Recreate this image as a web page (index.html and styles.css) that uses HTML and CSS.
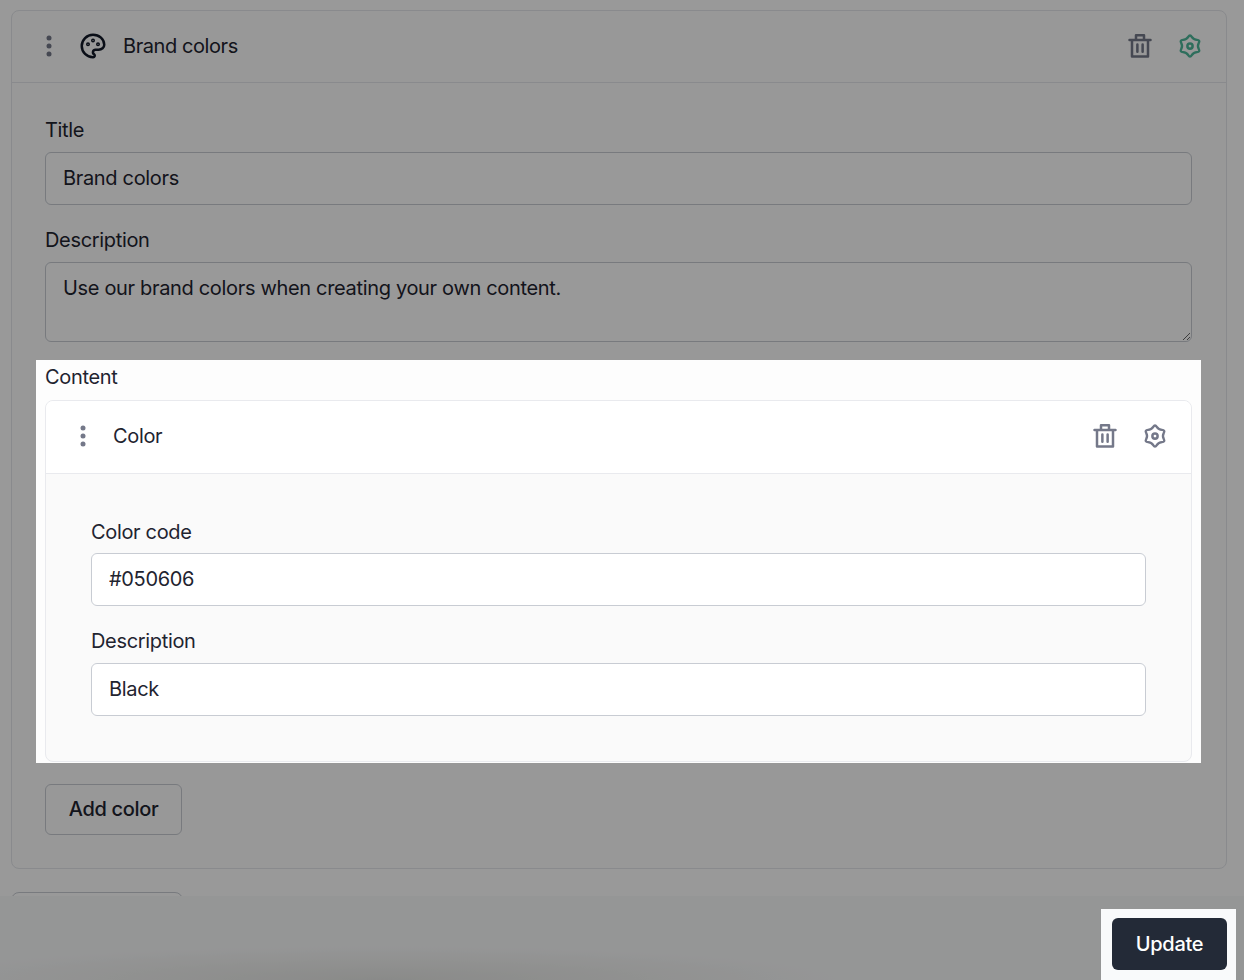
FILE: index.html
```html
<!DOCTYPE html>
<html lang="en">
<head>
<meta charset="utf-8">
<title>Brand colors</title>
<link rel="stylesheet" href="styles.css">
</head>
<body>
<div class="page">
  <section class="card">
    <header class="card-head">
      <svg class="dots" viewBox="0 0 6 24" width="6" height="24"><circle cx="3" cy="4" r="2.5"/><circle cx="3" cy="12" r="2.5"/><circle cx="3" cy="20" r="2.5"/></svg>
      <svg class="palette" viewBox="0 0 24 24" width="30" height="30" fill="none" stroke="currentColor" stroke-width="2" stroke-linecap="round" stroke-linejoin="round"><path d="M12 21a9 9 0 0 1 0-18c4.97 0 9 3.582 9 8 0 1.06-.474 2.078-1.318 2.828-.844.75-1.989 1.172-3.182 1.172h-2.5a2 2 0 0 0-1 3.75 1.3 1.3 0 0 1-1 2.25"/><circle cx="8" cy="10.5" r=".6"/><circle cx="12" cy="7.5" r=".6"/><circle cx="16" cy="10.5" r=".6"/></svg>
      <span class="card-title">Brand colors</span>
      <span class="actions">
        <svg class="icon" viewBox="0 0 24 24" width="30" height="30" fill="none" stroke="currentColor" stroke-width="2" stroke-linecap="round" stroke-linejoin="round"><path d="M3.600 7.200h16.800M8.800 7.200V3.400h6.400v3.800M5.600 7.200V20.400h12.800V7.200M9.900 10.800v5.800M14.100 10.800v5.800"/></svg>
        <svg class="icon icon-green" viewBox="0 0 24 24" width="30" height="30" fill="none" stroke="currentColor" stroke-width="2" stroke-linecap="round" stroke-linejoin="round"><path transform="translate(.6 .6) scale(.95)" d="M10.500 4.350Q12 1.900 13.500 4.350 15 6.800 17.880 6.880 20.750 6.950 19.380 9.480 18 12 19.380 14.520 20.750 17.050 17.880 17.120 15 17.200 13.500 19.650 12 22.100 10.500 19.650 9 17.200 6.120 17.120 3.250 17.050 4.620 14.520 6 12 4.620 9.480 3.250 6.950 6.120 6.880 9 6.800 10.500 4.350Z"/><circle cx="12" cy="12" r="2.100"/></svg>
      </span>
    </header>
    <div class="card-body">
      <label class="field">
        <span class="label">Title</span>
        <input class="input" type="text" value="Brand colors">
      </label>
      <label class="field">
        <span class="label">Description</span>
        <textarea class="input textarea">Use our brand colors when creating your own content.</textarea>
      </label>
      <div class="content">
        <span class="label content-label">Content</span>
        <section class="subcard">
          <header class="subcard-head">
            <svg class="dots" viewBox="0 0 6 24" width="6" height="24"><circle cx="3" cy="4" r="2.500"/><circle cx="3" cy="12" r="2.500"/><circle cx="3" cy="20" r="2.500"/></svg>
            <span class="card-title">Color</span>
            <span class="actions">
              <svg class="icon" viewBox="0 0 24 24" width="30" height="30" fill="none" stroke="currentColor" stroke-width="2" stroke-linecap="round" stroke-linejoin="round"><path d="M3.600 7.200h16.800M8.800 7.200V3.400h6.400v3.800M5.600 7.200V20.400h12.800V7.200M9.900 10.800v5.800M14.100 10.800v5.800"/></svg>
              <svg class="icon" viewBox="0 0 24 24" width="30" height="30" fill="none" stroke="currentColor" stroke-width="2" stroke-linecap="round" stroke-linejoin="round"><path transform="translate(.6 .6) scale(.95)" d="M10.500 4.350Q12 1.900 13.500 4.350 15 6.800 17.880 6.880 20.750 6.950 19.380 9.480 18 12 19.380 14.520 20.750 17.050 17.880 17.120 15 17.200 13.500 19.650 12 22.100 10.500 19.650 9 17.200 6.120 17.120 3.250 17.050 4.620 14.520 6 12 4.620 9.480 3.250 6.950 6.120 6.880 9 6.800 10.500 4.350Z"/><circle cx="12" cy="12" r="2.100"/></svg>
            </span>
          </header>
          <div class="subcard-body">
            <label class="field">
              <span class="label">Color code</span>
              <input class="input" type="text" value="#050606">
            </label>
            <label class="field">
              <span class="label label-wide">Description</span>
              <input class="input" type="text" value="Black">
            </label>
          </div>
        </section>
      </div>
      <button class="btn-outline" type="button">Add color</button>
    </div>
  </section>
  <div class="next-card"></div>
</div>
<footer class="footer">
  <button class="btn-primary" type="button">Update</button>
</footer>
<div class="scrim"></div>
</body>
</html>
```
FILE: styles.css
```css
* { box-sizing: border-box; }
html, body { margin: 0; height: 100%; }
body {
  position: relative;
  height: 980px;
  overflow: hidden;
  background: #fff;
  color: #1f2430;
  font-family: Inter, "Liberation Sans", sans-serif;
  font-size: 20px;
  line-height: 24px;
  letter-spacing: -.33px;
}
.page { padding: 10px 17px 0 11px; }
.card {
  border: 1px solid #e5e7eb;
  border-radius: 8px;
  height: 859px;
  background: #fdfdfd;
}
.card-head {
  display: flex;
  align-items: center;
  height: 72px;
  padding: 0 21.5px 2px 33.5px;
  border-bottom: 1px solid #e5e7eb;
}
.dots { fill: #747889; flex: none; }
.palette { margin-left: 26px; color: #111827; flex: none; }
.card-title { margin-left: 15.5px; letter-spacing: -.42px; }
.actions { display: flex; gap: 20px; margin-left: auto; }
.icon { color: #747889; display: block; }
.icon-green { color: #4eb79a; }
.card-body { padding: 35px 34px 0 33px; }
.field { display: block; margin-bottom: 23px; }
.label { display: block; margin-bottom: 10px; }
.input {
  display: block;
  width: 100%;
  height: 53px;
  padding: 0 17px 1px;
  border: 1px solid #c8ccd3;
  border-radius: 6px;
  background: #fff;
  color: #1f2430;
  font: inherit;
  letter-spacing: inherit;
  outline: 0;
}
.textarea { height: 80px; padding: 13px 17px; }
.content { margin-bottom: 22px; }
.content-label { margin-bottom: 11px; }
.subcard {
  border: 1.25px solid #e9eaee;
  border-radius: 8px;
  height: 362px;
  background: #fafafa;
  overflow: hidden;
}
.subcard-head {
  display: flex;
  align-items: center;
  height: 73px;
  padding: 0 21.5px 2px 33.5px;
  background: #fff;
  border-bottom: 1px solid #e9eaee;
}
.subcard-head .card-title { margin-left: 27.5px; letter-spacing: -.33px; }
.subcard-body { padding: 46px 45px 0; }
.subcard-body .label { margin-bottom: 9px; }
.subcard-body .label-wide { margin-bottom: 10px; }
.btn-outline {
  display: block;
  width: 137px;
  height: 51px;
  padding: 0 0 1px;
  border: 1px solid #c8ccd3;
  border-radius: 6px;
  background: transparent;
  color: #1f2430;
  font: 500 20px/24px Inter, "Liberation Sans", sans-serif;
  letter-spacing: inherit;
}
.next-card {
  width: 172px;
  height: 40px;
  margin-top: 23px;
  border: 1px solid #c8ccd3;
  border-radius: 8px;
}
.footer {
  position: absolute;
  left: 0;
  right: 0;
  bottom: 0;
  height: 84px;
  padding: 22px 17px 0 0;
  display: flex;
  justify-content: flex-end;
  align-items: flex-start;
  background: radial-gradient(ellipse 460px 34px at 380px 100%, #e6e7e5 0%, #f2f3f2 60%, rgba(249,250,251,0) 100%), #f9fafb;
}
.btn-primary {
  width: 115px;
  height: 52px;
  padding: 0;
  border: 0;
  border-radius: 6px;
  background: #232a37;
  color: #fff;
  font: 500 20px/24px Inter, "Liberation Sans", sans-serif;
  letter-spacing: inherit;
}
.scrim {
  position: absolute;
  inset: 0;
  background: rgba(0, 0, 0, .4);
  clip-path: path(evenodd, "M0 0H1244V980H0Z M36 360H1201V763H36Z M1101 909H1236V980H1101Z");
}
```
